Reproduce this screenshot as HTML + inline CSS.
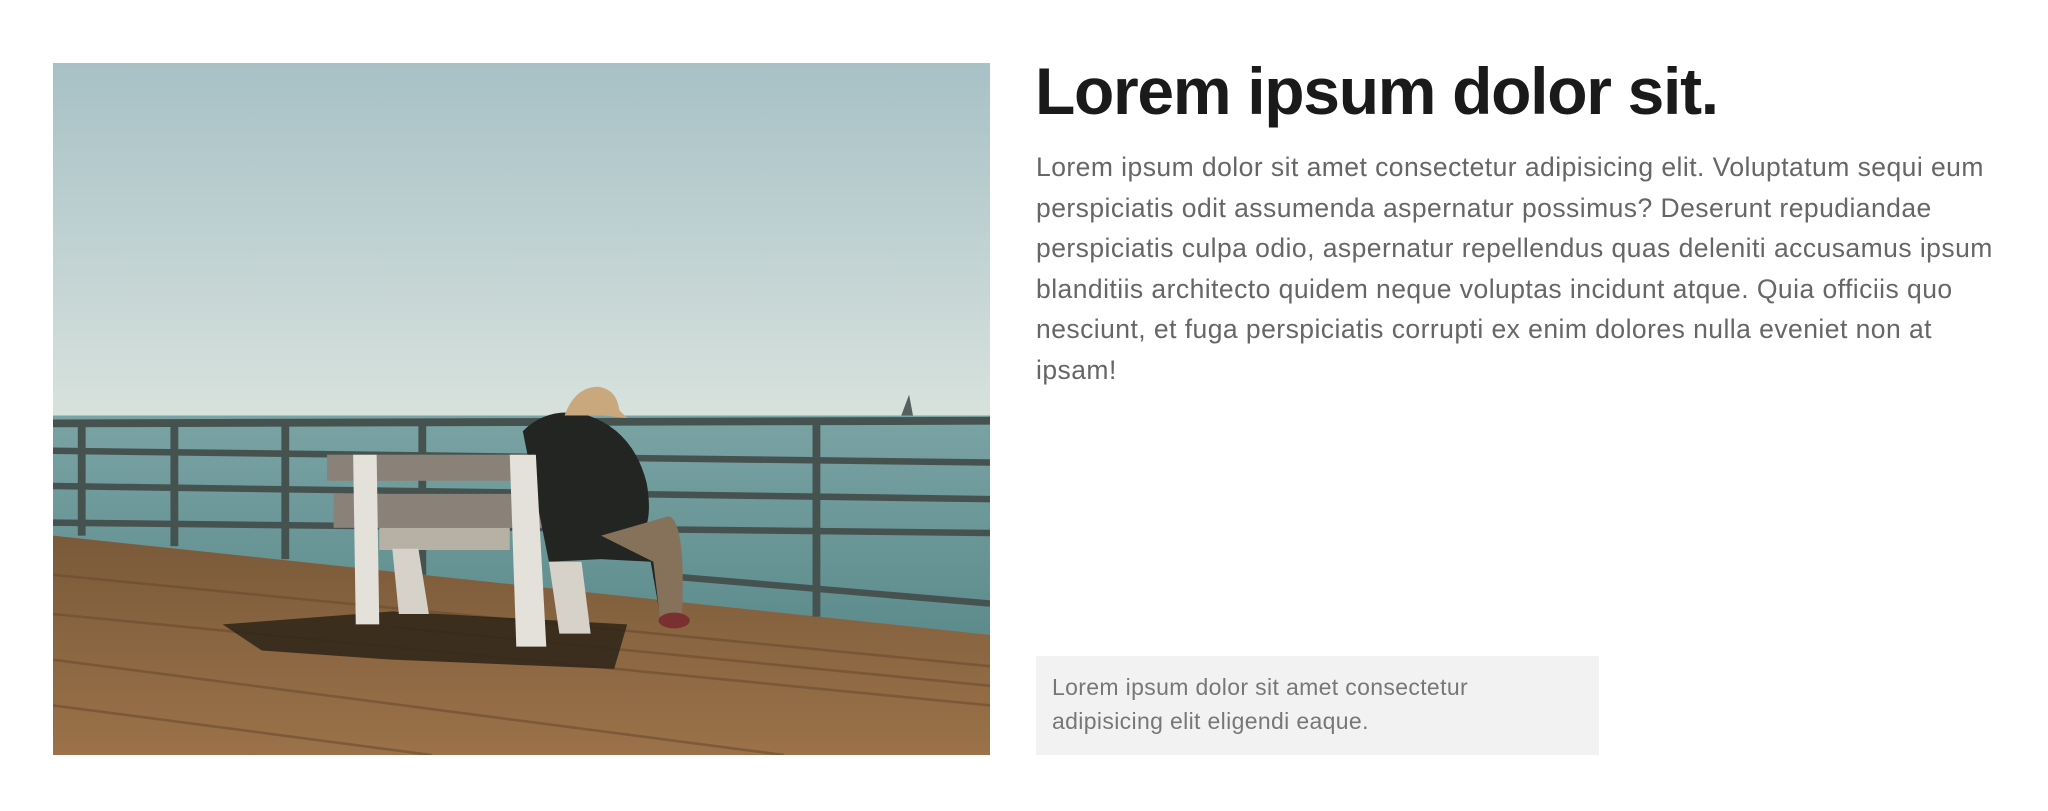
<!DOCTYPE html>
<html><head><meta charset="utf-8"><style>
html,body{margin:0;padding:0;background:#fff;width:2048px;height:811px;overflow:hidden}
.photo{position:absolute;left:53px;top:63px;width:937px;height:692px}
h1{position:absolute;left:1035px;top:52px;margin:0;font:bold 66px/1.2 "Liberation Sans",sans-serif;color:#1a1a1a;letter-spacing:-1.3px;white-space:nowrap}
.p{position:absolute;left:1036px;top:147px;font:26.5px/40.5px "Liberation Sans",sans-serif;color:#666;white-space:nowrap;letter-spacing:0.45px}
.box{position:absolute;left:1036px;top:656px;width:563px;height:99px;background:#f2f2f2}
.box div{position:absolute;left:16px;top:14px;font:23px/34px "Liberation Sans",sans-serif;color:#777;white-space:nowrap;letter-spacing:0.35px}
</style></head><body>
<svg class="photo" viewBox="40 48 718 530" preserveAspectRatio="none">
<defs>
<linearGradient id="sky" x1="0" y1="0" x2="0" y2="1"><stop offset="0" stop-color="#a7c1c6"/><stop offset="1" stop-color="#d8e2dd"/></linearGradient>
<linearGradient id="sea" x1="0" y1="0" x2="0" y2="1"><stop offset="0" stop-color="#7aa3a4"/><stop offset="1" stop-color="#5b8a8b"/></linearGradient>
<linearGradient id="deck" x1="0" y1="0" x2="0" y2="1"><stop offset="0" stop-color="#7a5a3a"/><stop offset="1" stop-color="#9b7249"/></linearGradient>
</defs>
<rect x="40" y="48" width="718" height="272" fill="url(#sky)"/>
<rect x="40" y="318" width="718" height="180" fill="url(#sea)"/>
<polygon points="40,410 758,486 758,578 40,578" fill="url(#deck)"/>
<g stroke="#6b4c30" stroke-width="2" opacity=".6">
<line x1="40" y1="440" x2="758" y2="510"/><line x1="40" y1="470" x2="758" y2="540"/><line x1="40" y1="505" x2="600" y2="578"/><line x1="40" y1="540" x2="330" y2="578"/><line x1="300" y1="480" x2="758" y2="525"/>
</g>
<g stroke="#46524f" fill="none">
<path d="M40 324 L758 322" stroke-width="6"/>
<path d="M40 345 L758 354" stroke-width="5"/>
<path d="M40 372 L758 382" stroke-width="5"/>
<path d="M40 400 L758 408" stroke-width="5"/>
<path d="M500 440 L758 462" stroke-width="5"/>
<path d="M62 324 V410 M133 324 V418 M218 324 V428 M323 324 V440 M625 322 V472" stroke-width="6"/>
</g>
<polygon points="170,478 300,468 480,478 470,512 300,505 200,498" fill="#2e2418" opacity=".85"/>
<g fill="#8a8279">
<rect x="250" y="348" width="200" height="20"/>
<rect x="255" y="378" width="200" height="26"/>
<rect x="290" y="404" width="100" height="17" fill="#b7b0a5"/>
</g>
<path d="M400 330 Q420 310 450 318 Q485 330 495 370 Q500 400 490 410 L515 400 Q525 420 520 468 L505 470 L498 430 L460 428 L420 430 Z" fill="#222522"/>
<path d="M460 410 L512 395 Q525 400 522 470 L505 472 L500 430 Z" fill="#86725b"/>
<ellipse cx="516" cy="475" rx="12" ry="6" fill="#7a3030"/>
<path d="M432 318 Q440 296 458 296 Q472 298 474 314 L480 320 L462 318 Z" fill="#c9a87e"/>
<path d="M270 348 L288 348 L290 478 L272 478 Z M390 348 L410 348 L418 495 L395 495 Z" fill="#e4e0da"/>
<path d="M300 420 L320 420 L328 470 L305 470 Z M420 430 L445 430 L452 485 L428 485 Z" fill="#d6d1c9"/>
<polygon points="690,318 696,302 699,318" fill="#55615f"/>
</svg>
<h1>Lorem ipsum dolor sit.</h1>
<div class="p">Lorem ipsum dolor sit amet consectetur adipisicing elit. Voluptatum sequi eum<br>perspiciatis odit assumenda aspernatur possimus? Deserunt repudiandae<br>perspiciatis culpa odio, aspernatur repellendus quas deleniti accusamus ipsum<br>blanditiis architecto quidem neque voluptas incidunt atque. Quia officiis quo<br>nesciunt, et fuga perspiciatis corrupti ex enim dolores nulla eveniet non at<br>ipsam!</div>
<div class="box"><div>Lorem ipsum dolor sit amet consectetur<br>adipisicing elit eligendi eaque.</div></div>
</body></html>
